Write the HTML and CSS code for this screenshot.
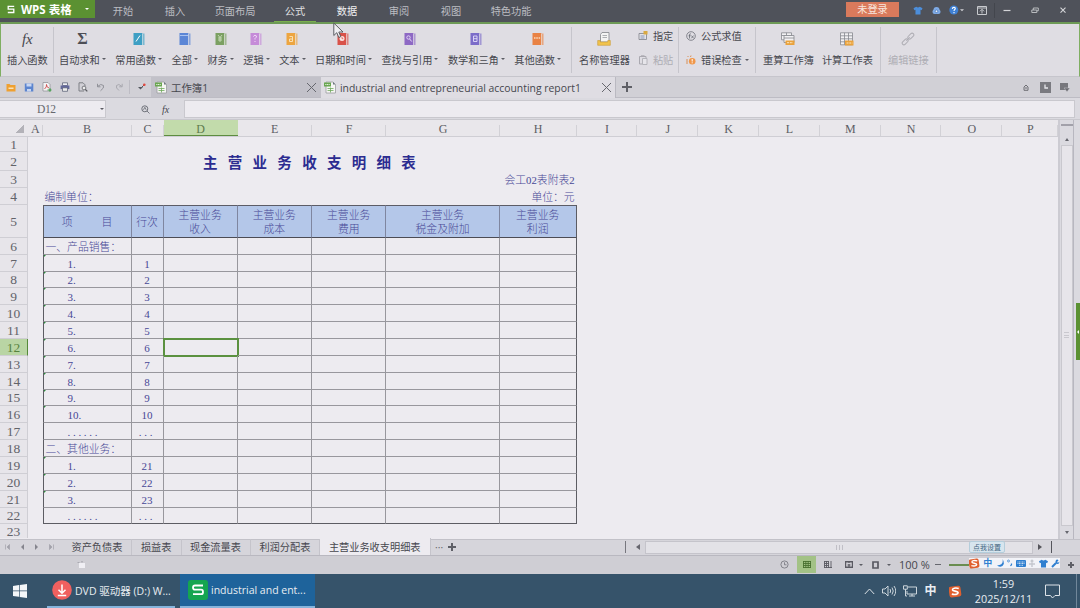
FILE: index.html
```
<!DOCTYPE html>
<html lang="zh-CN">
<head>
    <meta charset="UTF-8">
    <meta name="viewport" content="width=device-width, initial-scale=1.0">
    <title>WPS 表格</title>
    <link rel="stylesheet" href="styles.css">
</head>
<body>

<svg class="defs" width="0" height="0">
    <symbol id="book" viewBox="0 0 12 13">
        <rect x="0.5" y="0.5" width="9" height="12" fill="currentColor"/>
        <rect x="9.5" y="1" width="2" height="11.5" fill="currentColor" opacity=".65"/>
        <path d="M9.6 1v11.5" stroke="#eee" stroke-width=".6"/>
    </symbol>
    <symbol id="sheetfile" viewBox="0 0 12 13">
        <path d="M2 1h7l2.5 2.5V12H2z" fill="#f6f6f4" stroke="#9a9da0" stroke-width=".8"/>
        <path d="M9 1v2.5h2.5z" fill="#6f7680"/>
        <rect x="0" y="1.5" width="7" height="4" fill="#69a650"/>
        <path d="M1.3 3.5h4.4" stroke="#e4f2dc" stroke-width="1" stroke-dasharray="1.2 .5"/>
        <path d="M3.5 7.5h6M3.5 9.5h6M6.5 6.5v5" stroke="#6fa95a" stroke-width=".8"/>
    </symbol>
    <symbol id="sogou" viewBox="0 0 12 12">
        <rect x="0" y="1" width="11" height="10" rx="2" fill="#e0602f" transform="rotate(-8 6 6)"/>
        <path d="M9 3.200C6 2.300 3 3 3.200 4.500c.2 1.400 5.200 1 5.200 2.700 0 1.600-2.900 1.900-5.800 1.200" fill="none" stroke="#fff" stroke-width="1.500"/>
    </symbol>
    <symbol id="shirt" viewBox="0 0 10 10">
        <path d="M3 .8Q5 2.300 7 .8L10 2.500 9 4.800 7.800 4.300V9.500H2.200V4.300L1 4.800 0 2.500z" fill="currentColor"/>
    </symbol>
</svg>

<div class="titlebar">
    <div class="brand">
        <svg width="8" height="9" viewBox="0 0 8 9"><path d="M7.200 1.300H1.200V4.200H6.800V7.500H.8" fill="none" stroke="#fff" stroke-width="1.300"/></svg>
        <span>WPS 表格</span>
        <i class="arrow"></i>
    </div>
    <div class="menu">
        <a>开始</a>
        <a>插入</a>
        <a class="wide">页面布局</a>
        <a class="active">公式</a>
        <a class="hover">数据</a>
        <a>审阅</a>
        <a>视图</a>
        <a class="wide">特色功能</a>
    </div>
    <div class="login">未登录</div>
    <div class="winbtns">
        <svg class="blue" width="10" height="9"><use href="#shirt"/></svg>
        <svg class="blue" width="9" height="9" viewBox="0 0 9 9"><circle cx="4.500" cy="4" r="3" fill="#7fabe6"/><rect x=".5" y="3.500" width="8" height="4.500" rx="2" fill="#7fabe6"/><circle cx="4.500" cy="5.300" r="1.300" fill="#eef4fb" stroke="#3d6fb5" stroke-width=".7"/></svg>
        <svg class="help" width="15" height="10" viewBox="0 0 15 10"><circle cx="4.800" cy="5" r="4.500" fill="#3f80d4"/><path d="M3.300 3.900Q3.500 2.300 5 2.400 6.600 2.700 6.200 4 5 4.900 5 6M5 7v1.200" fill="none" stroke="#fff" stroke-width="1.100"/><path d="M11 4.300h4l-2 2z" fill="#d0d2d6"/></svg>
        <svg class="skin" width="10" height="9" viewBox="0 0 10 9"><path d="M.5.5h9v8h-9zM.5 2h9M5 7.500V3.500M3 5.300l2-2 2 2" fill="none" stroke="#c8cace"/></svg>
        <i class="wsep"></i>
        <svg width="8" height="8" viewBox="0 0 8 8"><path d="M.5 4.500h7" stroke="#d4d5d8" stroke-width="1.200"/></svg>
        <svg width="8" height="8" viewBox="0 0 8 8"><path d="M.8 4h5v2.500h-5zM2.300 4V2h5v2.800H6" fill="none" stroke="#c4c6ca" stroke-width=".9"/></svg>
        <svg width="8" height="8" viewBox="0 0 8 8"><path d="M1.500 1.700l5 5M6.500 1.700l-5 5" stroke="#d4d5d8" stroke-width="1.100"/></svg>
    </div>
</div>

<div class="ribbon">
    <div class="group first">
        <div class="btn"><em class="fx">fx</em><span>插入函数</span></div>
    </div>
    <div class="group funcs">
        <div class="btn"><em class="sigma">Σ</em><span>自动求和<i class="arrow"></i></span></div>
        <div class="btn"><svg class="c-teal" width="12" height="13"><use href="#book"/><path d="M3 9.500l4-6" stroke="#fff"/></svg><span>常用函数<i class="arrow"></i></span></div>
        <div class="btn"><svg class="c-blue" width="12" height="13"><use href="#book"/><path d="M1 3.500h8" stroke="#a8c2ef"/></svg><span>全部<i class="arrow"></i></span></div>
        <div class="btn"><svg class="c-green" width="12" height="13"><use href="#book"/><path d="M3 3l2 2.500L7 3M5 5.500V10M3 6h4M3 8h4" fill="none" stroke="#d6e6c8" stroke-width=".8"/></svg><span>财务<i class="arrow"></i></span></div>
        <div class="btn"><svg class="c-pink" width="12" height="13"><use href="#book"/><path d="M3.300 4.500Q5 2 6.500 4 6.500 5.500 5 6.500v1M5 9v1" fill="none" stroke="#f6e0fa" stroke-width=".9"/></svg><span>逻辑<i class="arrow"></i></span></div>
        <div class="btn"><svg class="c-amber" width="12" height="13"><use href="#book"/><path d="M3.500 4.500h3v5h-3V7h3" fill="none" stroke="#fce6be" stroke-width=".9"/></svg><span>文本<i class="arrow"></i></span></div>
        <div class="btn"><svg class="c-red" width="12" height="13"><use href="#book"/><circle cx="5" cy="6.500" r="2.500" fill="#fbe4e2"/><path d="M5 5v1.700h1.300" fill="none" stroke="#d5483f" stroke-width=".7"/></svg><span>日期和时间<i class="arrow"></i></span></div>
        <div class="btn"><svg class="c-violet" width="12" height="13"><use href="#book"/><circle cx="4.500" cy="5.500" r="1.700" fill="none" stroke="#e8dcf8" stroke-width=".9"/><path d="M5.700 7l2 2.500" stroke="#e8dcf8"/></svg><span>查找与引用<i class="arrow"></i></span></div>
        <div class="btn"><svg class="c-indigo" width="12" height="13"><use href="#book"/><path d="M3.500 4h3.500v5.500H3.500zM3.500 6.700H7" fill="none" stroke="#e2dcf8" stroke-width=".9"/></svg><span>数学和三角<i class="arrow"></i></span></div>
        <div class="btn"><svg class="c-orange" width="12" height="13"><use href="#book"/><path d="M2 6h6.500" stroke="#fbd9bd" stroke-width="1.500" stroke-dasharray="1.500 .8"/></svg><span>其他函数<i class="arrow"></i></span></div>
    </div>
    <div class="group names">
        <div class="btn"><svg width="14" height="14" viewBox="0 0 14 14"><path d="M3.500 10V2.500l1.500-2h7V10z" fill="#f4f4f4" stroke="#8c8f94" stroke-width=".9"/><path d="M5.500 3.500h4.500M5.500 5.500h4.500" stroke="#9a9da2" stroke-width=".8"/><path d="M.7 8.500v4.800h12.600V8.500h-2.500v1.500H3.200V8.500z" fill="#f1c34c" stroke="#c99b34" stroke-width=".6"/></svg><span>名称管理器</span></div>
        <div class="stack">
            <div><svg width="10" height="9" viewBox="0 0 10 9"><path d="M1 2.500h7.500v6H1z" fill="#e4e4ea" stroke="#7d8088" stroke-width=".8"/><path d="M2.500 5h4M2.500 7h4" stroke="#7081a8" stroke-width=".8"/><rect x="5.500" y="0" width="4" height="3.500" fill="#d9a942"/></svg>指定</div>
            <div class="off"><svg width="10" height="10" viewBox="0 0 10 10"><path d="M4 9H1.500V1.500H8V3M3 .8h3.500" fill="none" stroke="#aaa9b0"/><path d="M4.500 3.500H9v6H4.500z" fill="#e6e5ea" stroke="#aaa9b0" stroke-width=".8"/></svg>粘贴</div>
        </div>
    </div>
    <div class="group audit">
        <div class="stack">
            <div><svg width="10" height="10" viewBox="0 0 10 10"><circle cx="5" cy="5" r="4.300" fill="none" stroke="#6d7078" stroke-width=".8"/><path d="M4.800 2.800Q3.500 2.500 3.500 4v3.500M2.500 4.800h2.200M5.300 4.500l2.400 2.800M7.700 4.500L5.300 7.300" fill="none" stroke="#5c6068" stroke-width=".7"/></svg>公式求值</div>
            <div><svg width="10" height="10" viewBox="0 0 10 10"><path d="M1.500 1l1 1M5 .5L4.500 2M1 4v5" stroke="#d98f55" stroke-width="1"/><circle cx="6.200" cy="6.200" r="3.300" fill="#f0974a"/><path d="M6.200 4v2.500M6.200 7.300v1" stroke="#fff" stroke-width="1"/></svg>错误检查<i class="arrow"></i></div>
        </div>
    </div>
    <div class="group calc">
        <div class="btn"><svg width="14" height="14" viewBox="0 0 14 14"><path d="M.5.800h10v7H.5zM.5 3.500h10M5.500.800v7" fill="#f2f1f4" stroke="#85888e" stroke-width=".8"/><path d="M3 3.500h10v7H3zM3 6h10" fill="#f2f1f4" stroke="#85888e" stroke-width=".8"/><rect x="4.500" y="8.500" width="9" height="4.500" fill="#e9a23c"/><path d="M6 10.700h6" stroke="#fbe6bf" stroke-dasharray="2 .8"/></svg><span>重算工作簿</span></div>
        <div class="btn"><svg width="14" height="14" viewBox="0 0 14 14"><path d="M.5.800h12v12H.5zM.5 3.800h12M.5 6.800h12M.5 9.800h12M4.500.800v12M8.500.800v12" fill="#f2f1f4" stroke="#85888e" stroke-width=".8"/><rect x="5" y="8.500" width="8.500" height="5" fill="#e9a23c"/><path d="M6.500 11h6" stroke="#fbe6bf" stroke-dasharray="2 .8"/></svg><span>计算工作表</span></div>
    </div>
    <div class="group links">
        <div class="btn off"><svg width="14" height="14" viewBox="0 0 14 14"><g fill="none" stroke="#aeadb4" transform="rotate(-45 7 7)"><rect x="-.5" y="5.300" width="7" height="3.400" rx="1.700"/><rect x="7.500" y="5.300" width="7" height="3.400" rx="1.700"/><path d="M4.500 7h5"/></g></svg><span>编辑链接</span></div>
    </div>
</div>

<div class="tabbar">
    <div class="quick">
        <svg width="10" height="9" viewBox="0 0 10 9"><path d="M.5 1h3l1 1h5v6.500h-9z" fill="#efa030"/><path d="M2.500 4.500h5V6h-5z" fill="#fae2b6"/></svg>
        <svg width="10" height="9" viewBox="0 0 10 9"><path d="M.8.500h8.500v8H.800z" fill="#5c85cf"/><path d="M2.500.500h5v3h-5zM3 6h4v2.500H3z" fill="#c7d6f2"/></svg>
        <svg width="10" height="10" viewBox="0 0 10 10"><path d="M1 .5h5l2 2V9H1z" fill="#f4f2f4" stroke="#8a8c92" stroke-width=".7"/><path d="M2.500 7Q5 5 4.500 2.500 4.500 5.500 7 6" fill="none" stroke="#cc4a48" stroke-width=".9"/><path d="M5.500 8h4M8 6.300v3.400" stroke="#3d9b45" stroke-width="1.100"/></svg>
        <svg width="10" height="10" viewBox="0 0 10 10"><path d="M2.500.800h5V3.500h-5z" fill="#f0f0f4" stroke="#60647a" stroke-width=".8"/><rect x=".6" y="3.500" width="8.800" height="3.600" fill="#62679b"/><path d="M2.500 5.800h5V9.300h-5z" fill="#eee" stroke="#60647a" stroke-width=".8"/></svg>
        <svg width="10" height="10" viewBox="0 0 10 10"><path d="M6 9H1V.800h4l2 2V4" fill="none" stroke="#75777d" stroke-width=".9"/><circle cx="6" cy="6" r="1.900" fill="#eee" stroke="#6b6d73" stroke-width=".9"/><path d="M7.300 7.400l2 2" stroke="#55575c" stroke-width="1.300"/></svg>
        <svg width="10" height="9" viewBox="0 0 10 9"><path d="M1.500 3.500Q5 0 7.500 2.500 8.500 5 4.500 7.800M1.500.800v3h3" fill="none" stroke="#909198"/></svg>
        <svg width="10" height="9" viewBox="0 0 10 9"><path d="M8 3.500Q4.500 0 2.500 2.500 1.500 5 5 7.500M8.200.800v3h-3" fill="none" stroke="#a9a9b0"/></svg>
    </div>
    <div class="more"><svg width="10" height="9" viewBox="0 0 10 9"><path d="M1 4h5L3.500 6.500z" fill="#55585f"/><path d="M4 5l3-3" stroke="#55585f"/><circle cx="7.300" cy="1.700" r="1.300" fill="#e2453c"/></svg></div>
    <div class="doc"><svg width="12" height="13"><use href="#sheetfile"/></svg><span>工作簿1</span><b class="x"></b></div>
    <div class="doc current"><svg width="12" height="13"><use href="#sheetfile"/></svg><span>industrial and entrepreneurial accounting report1</span><b class="x"></b></div>
    <b class="plus"></b>
    <div class="tabicons">
        <svg width="6" height="7" viewBox="0 0 6 7"><path d="M1 3v3.300h4V3L3 1z" fill="none" stroke="#6e6e74"/><path d="M3 3v2" stroke="#6e6e74"/></svg>
        <svg width="11" height="11" viewBox="0 0 11 11"><rect width="11" height="11" fill="#7a7a80"/><path d="M5 2.500v3.500h3" fill="none" stroke="#e6e6ea" stroke-width="1.300"/></svg>
        <svg width="10" height="9" viewBox="0 0 10 9"><rect width="8" height="7" fill="#77777d"/><path d="M4 5h6l-3 3.800z" fill="#6a6a70" stroke="#d1d0d6" stroke-width=".5"/></svg>
    </div>
</div>

<div class="formulabar">
    <div class="namebox"><span>D12</span><i class="arrow"></i></div>
    <svg width="9" height="9" viewBox="0 0 9 9"><circle cx="3.800" cy="3.800" r="3" fill="none" stroke="#6d7078"/><path d="M2.500 4.800l1.300-2.500 1.300 2.500M6 6l2.500 2.500" fill="none" stroke="#6d7078" stroke-width=".9"/></svg>
    <em>fx</em>
    <div class="input"></div>
</div>

<div class="workspace">
    <div class="sheet">
        <div class="row colhead">
            <b class="corner"></b><span>A</span><span>B</span><span>C</span><span class="sel">D</span><span>E</span><span>F</span><span>G</span><span>H</span><span>I</span><span>J</span><span>K</span><span>L</span><span>M</span><span>N</span><span>O</span><span>P</span>
        </div>
        <div class="row r1"><b>1</b></div>
        <div class="row r2"><b>2</b><h1>主营业务收支明细表</h1></div>
        <div class="row r3"><b>3</b><p class="right">会工02表附表2</p></div>
        <div class="row r3"><b>4</b><p class="left">编制单位：</p><p class="right">单位：元</p></div>
        <div class="row head"><b>5</b><i></i><span class="item"><u>项</u><u>目</u></span><span>行次</span><span>主营业务<br>收入</span><span>主营业务<br>成本</span><span>主营业务<br>费用</span><span>主营业务<br>税金及附加</span><span>主营业务<br>利润</span></div>
        <div class="row data"><b>6</b><i></i><span class="section">一、产品销售：</span><span></span><span></span><span></span><span></span><span></span><span></span></div>
        <div class="row data"><b>7</b><i></i><span class="mark">1.</span><span>1</span><span></span><span></span><span></span><span></span><span></span></div>
        <div class="row data"><b>8</b><i></i><span class="mark">2.</span><span>2</span><span></span><span></span><span></span><span></span><span></span></div>
        <div class="row data"><b>9</b><i></i><span class="mark">3.</span><span>3</span><span></span><span></span><span></span><span></span><span></span></div>
        <div class="row data"><b>10</b><i></i><span class="mark">4.</span><span>4</span><span></span><span></span><span></span><span></span><span></span></div>
        <div class="row data"><b>11</b><i></i><span class="mark">5.</span><span>5</span><span></span><span></span><span></span><span></span><span></span></div>
        <div class="row data"><b class="sel">12</b><i></i><span class="mark">6.</span><span>6</span><span class="cursor-cell"></span><span></span><span></span><span></span><span></span></div>
        <div class="row data"><b>13</b><i></i><span class="mark">7.</span><span>7</span><span></span><span></span><span></span><span></span><span></span></div>
        <div class="row data"><b>14</b><i></i><span class="mark">8.</span><span>8</span><span></span><span></span><span></span><span></span><span></span></div>
        <div class="row data"><b>15</b><i></i><span class="mark">9.</span><span>9</span><span></span><span></span><span></span><span></span><span></span></div>
        <div class="row data"><b>16</b><i></i><span class="mark">10.</span><span>10</span><span></span><span></span><span></span><span></span><span></span></div>
        <div class="row data"><b>17</b><i></i><span class="dots">......</span><span class="dots">...</span><span></span><span></span><span></span><span></span><span></span></div>
        <div class="row data"><b>18</b><i></i><span class="section">二、其他业务：</span><span></span><span></span><span></span><span></span><span></span><span></span></div>
        <div class="row data"><b>19</b><i></i><span class="mark">1.</span><span>21</span><span></span><span></span><span></span><span></span><span></span></div>
        <div class="row data"><b>20</b><i></i><span class="mark">2.</span><span>22</span><span></span><span></span><span></span><span></span><span></span></div>
        <div class="row data"><b>21</b><i></i><span class="mark">3.</span><span>23</span><span></span><span></span><span></span><span></span><span></span></div>
        <div class="row data last"><b>22</b><i></i><span class="dots">......</span><span class="dots">...</span><span></span><span></span><span></span><span></span><span></span></div>
        <div class="row r23"><b>23</b></div>
    </div>
    <div class="vscroll">
        <div class="split"></div>
        <i class="up"></i>
        <div class="thumb"><i></i></div>
        <i class="down"></i>
    </div>
    <div class="edge"></div>
</div>

<div class="sheettabs">
    <div class="nav">
        <svg width="5" height="6" viewBox="0 0 5 6"><path d="M.5.500v5M4.500.500L2 3l2.500 2.500z" fill="#a2a2aa" stroke="#a2a2aa" stroke-width=".7"/></svg>
        <svg width="5" height="6" viewBox="0 0 5 6"><path d="M4 0L1 3l3 3z" fill="#85858e"/></svg>
        <svg width="5" height="6" viewBox="0 0 5 6"><path d="M1 0l3 3-3 3z" fill="#85858e"/></svg>
        <svg width="5" height="6" viewBox="0 0 5 6"><path d="M4.500.500v5M.5.500L3 3 .5 5.500z" fill="#a2a2aa" stroke="#a2a2aa" stroke-width=".7"/></svg>
    </div>
    <span>资产负债表</span><span>损益表</span><span>现金流量表</span><span>利润分配表</span><span class="current">主营业务收支明细表</span>
    <em>···</em>
    <b class="plus"></b>
    <div class="hscroll">
        <svg width="4" height="6" viewBox="0 0 4 6"><path d="M4 0L0 3l4 3z" fill="#66666e"/></svg>
        <div class="track"><i></i></div>
        <svg width="4" height="6" viewBox="0 0 4 6"><path d="M0 0l4 3-4 3z" fill="#55555c"/></svg>
    </div>
</div>

<div class="status">
    <svg class="rec" width="9" height="8" viewBox="0 0 9 8"><path d="M2 2h6v5H2z" fill="#f0eff4"/><path d="M.5 1.500h2M4 .8h2" stroke="#a8a8b0"/></svg>
    <div class="views">
        <svg class="hist" width="9" height="9" viewBox="0 0 9 9"><circle cx="4.500" cy="4.500" r="3.600" fill="none" stroke="#7a7a82" stroke-width=".9"/><path d="M4.500 2.300v2.500h2" fill="none" stroke="#7a7a82" stroke-width=".9"/></svg>
        <div class="on"><svg width="8" height="7" viewBox="0 0 8 7"><path d="M0 .5h8M0 2.500h8M0 4.500h8M0 6.500h8M.5 0v7M2.800 0v7M5.200 0v7M7.500 0v7" stroke="#4a7030" stroke-width=".9"/></svg></div>
        <svg class="pg" width="8" height="7" viewBox="0 0 8 7"><path d="M0 .5h5M0 2.500h5M0 4.500h5M0 6.500h8M.5 0v7M2.500 0v7M4.500 0v7M7 0v7" stroke="#5a5a62" stroke-width=".9"/></svg>
        <svg class="br" width="8" height="7" viewBox="0 0 8 7"><path d="M.5.700h7v5.600h-7z" fill="none" stroke="#5a5a62" stroke-width="1.400"/><path d="M4 0v2M2.500 4h3M4 3v3" stroke="#5a5a62" stroke-width="1.200"/></svg>
        <i class="arrow"></i>
        <svg class="bx" width="7" height="8" viewBox="0 0 7 8"><path d="M1 1h5v6H1z" fill="none" stroke="#5a5a62" stroke-width="1.700"/></svg>
        <i class="arrow"></i>
        <span>100 %</span>
        <b class="minus"></b>
        <i class="slider"></i>
        <b class="plus"></b>
    </div>
</div>

<div class="taskbar">
    <svg class="win" width="14" height="14" viewBox="0 0 14 14"><path d="M0 2l6-.9V6.600H0zM6.700 1L14 0v6.600H6.700zM0 7.300h6v5.500L0 12zM6.700 7.300H14V14l-7.300-1z" fill="#f4f6f8"/></svg>
    <div class="task">
        <svg width="20" height="20" viewBox="0 0 20 20"><circle cx="10" cy="10" r="9.800" fill="#f0605f"/><path d="M10 4.500v8.500M6.500 9.800L10 13.200l3.500-3.400M5.800 15.500h8.400" fill="none" stroke="#fff" stroke-width="1.500"/></svg>
        <span>DVD 驱动器 (D:) W...</span>
    </div>
    <div class="task front">
        <svg width="20" height="20" viewBox="0 0 20 20"><rect width="20" height="20" rx="3" fill="#15a550"/><path d="M15 5.500H7Q5 5.500 5 7.500 5 9.700 7 9.700h6q2 0 2 2.200 0 2.300-2 2.300H5" fill="none" stroke="#fff" stroke-width="1.800"/></svg>
        <span>industrial and ent...</span>
    </div>
    <div class="tray">
        <svg width="11" height="7" viewBox="0 0 11 7"><path d="M.8 6l4.700-5 4.700 5" fill="none" stroke="#dde3e8"/></svg>
        <svg width="14" height="12" viewBox="0 0 14 12"><path d="M.5 4h2.500l3-3v10l-3-3H.5zM8 4q1.300 2 0 4M10 2.500q2.500 3.500 0 7M12 1q3.500 5 0 10" fill="none" stroke="#dde3e8" stroke-width=".9"/></svg>
        <svg width="14" height="12" viewBox="0 0 14 12"><path d="M5 2h8.500v7H4V6M6 11h6M9 9v2M.5.800h3.800v3.400H.5zM2.500 4.200V11H4" fill="none" stroke="#dde3e8" stroke-width=".9"/></svg>
        <b>中</b>
        <svg class="sg" width="13" height="13"><use href="#sogou"/></svg>
        <div class="clock">1:59<br>2025/12/11</div>
        <svg width="15" height="15" viewBox="0 0 15 15"><path d="M.5 1h14v10.500H10L7.500 14 5.500 11.500H.5z" fill="none" stroke="#dde3e8"/></svg>
        <i class="desk"></i>
    </div>
</div>

<!-- floating things -->
<div class="sidetab"></div>
<div class="imetip">点我设置</div>
<div class="ime">
    <svg width="11" height="11"><use href="#sogou"/></svg>
    <b>中</b>
    <svg width="8" height="8" viewBox="0 0 8 8"><path d="M6.500 0Q8 6 1 6.500 6 9.500 7.800 5 8 2 6.500 0z" fill="#2f7fd0"/></svg>
    <svg width="6" height="8" viewBox="0 0 6 8"><circle cx="1.500" cy="2" r="1" fill="none" stroke="#2f7fd0" stroke-width=".7"/><path d="M4.500 4.500v1.200L3.500 7" fill="none" stroke="#2f7fd0" stroke-width="1.200"/></svg>
    <svg width="10" height="7" viewBox="0 0 10 7"><rect width="10" height="7" rx="1" fill="#2f7fd0"/><path d="M1.500 2h7M1.500 3.500h7M3 5.300h4" stroke="#fff" stroke-width=".7" stroke-dasharray="1 .5"/></svg>
    <svg width="6" height="8" viewBox="0 0 6 8"><circle cx="3" cy="2" r="1.500" fill="#c5c8cf"/><path d="M0 5h6M3 3.500V8" stroke="#c5c8cf" stroke-width="1.500"/></svg>
    <svg width="9" height="9"><use href="#shirt"/></svg>
    <svg width="9" height="9" viewBox="0 0 9 9"><path d="M1 8l4-4" stroke="#2f7fd0" stroke-width="2"/><path d="M7.500 1.500L6 3l1 .8L8.500 2.500Q8.500 5.500 5.500 5 3.500 3 5 1 6.500 0 7.500 1.500z" fill="#2f7fd0"/></svg>
</div>
<svg class="pointer" width="12" height="17" viewBox="0 0 12 17"><path d="M.8 1v12.500l3-2.800 2 4.800 2-.9-2-4.600h4.200z" fill="#f0eff3" stroke="#4e5056" stroke-width=".9"/></svg>

</body>
</html>
```
FILE: styles.css
```
* {
    box-sizing: border-box;
}
body {
    margin: 0;
    width: 1080px;
    height: 608px;
    overflow: hidden;
    position: relative;
    display: flex;
    flex-direction: column;
    font-family: "Open Sans", "Noto Sans CJK SC", sans-serif;
    font-size: 10.2px;
    color: #46474e;
    background: #d1d0d6;
    white-space: nowrap;
}
svg {
    display: block;
    flex: none;
}
.defs {
    position: absolute;
}
i, em {
    font-style: normal;
}
.arrow {
    display: inline-block;
    border: 2px solid transparent;
    border-top-color: #5c5d64;
    border-bottom: 0;
}

/* title bar */
.titlebar {
    height: 24px;
    flex: none;
    display: flex;
    background: #4f525a;
    border-bottom: 2px solid #6d9a56;
}
.titlebar > div {
    flex: none;
}
.brand {
    width: 95px;
    height: 18px;
    padding-left: 7px;
    display: flex;
    align-items: center;
    background: #5b9132;
    color: #fff;
    font-size: 11.5px;
    font-weight: bold;
}
.brand span {
    width: 64px;
    margin-left: 6px;
}
.brand .arrow {
    border-top-color: #fff;
}
.menu {
    display: flex;
    margin-left: 2px;
    color: #bcbdc2;
}
.menu a {
    width: 52px;
    height: 22px;
    line-height: 23px;
    text-align: center;
}
.menu a.wide {
    width: 68px;
}
.menu .active {
    color: #e0e0e3;
    width: 42px;
    margin: 0 5px;
    border-bottom: 1px solid #7bb04e;
}
.menu .hover {
    color: #f0f0f2;
}
.login {
    width: 53px;
    height: 15px;
    margin: 2px 0 0 301px;
    line-height: 15px;
    text-align: center;
    background: #d97a5c;
    color: #f8e6de;
}
.winbtns {
    display: flex;
    align-items: center;
    height: 20px;
    margin-left: 14px;
}
.winbtns svg {
    margin-right: 20px;
}
.winbtns .blue {
    color: #4c8edb;
    margin-right: 9px;
}
.winbtns .help {
    margin: 0 13px 0 -1px;
}
.winbtns .skin {
    margin-right: 7px;
}
.wsep {
    width: 1px;
    height: 15px;
    margin-right: 8px;
    background: #43464d;
}

/* ribbon */
.ribbon {
    height: 53px;
    flex: none;
    display: flex;
    background: #dfdde3;
    border-left: 1px solid #7fae62;
    border-right: 1px solid #7fae62;
    border-bottom: 1px solid #c6c5cc;
}
.group {
    display: flex;
    flex: none;
    gap: 9px;
    height: 46px;
    margin-top: 3px;
    padding: 0 7px;
    border-right: 1px solid #c6c5cc;
}
.group.first {
    width: 53px;
    padding: 0 0 0 6px;
}
.group.funcs {
    width: 518px;
    padding-left: 5px;
    gap: 9.500px;
}
.group.names {
    width: 107px;
    gap: 8px;
}
.group.audit {
    width: 77px;
}
.group.calc {
    width: 125px;
    gap: 8px;
}
.btn {
    display: flex;
    flex-direction: column;
    align-items: center;
}
.btn svg, .btn em {
    height: 14px;
    margin-top: 5px;
}
.btn span {
    margin-top: 7px;
    line-height: 15px;
}
.btn .arrow, .stack .arrow {
    margin-left: 2px;
    vertical-align: 4px;
}
.fx {
    font: italic 15px/14px "Liberation Serif", serif;
}
.sigma {
    font: bold 16px/14px "Liberation Serif", serif;
    color: #4d4e55;
}
.off {
    color: #aeadb4;
}
.stack {
    display: flex;
    flex-direction: column;
    gap: 9px;
    padding-top: 1px;
}
.stack div {
    display: flex;
    align-items: center;
    gap: 5px;
    height: 15px;
}
.stack .arrow {
    margin-left: -2px;
}
.c-teal { color: #3e9fc4; }
.c-blue { color: #5b86d6; }
.c-green { color: #7ba062; }
.c-pink { color: #c58bd8; }
.c-amber { color: #eda540; }
.c-red { color: #d9524a; }
.c-violet { color: #8d68c4; }
.c-indigo { color: #7c6dc9; }
.c-orange { color: #e98244; }

/* document tabs */
.tabbar {
    height: 21px;
    flex: none;
    display: flex;
    align-items: center;
    border-bottom: 1px solid #bdbcc4;
    background: #d1d0d6;
}
.quick {
    width: 130px;
    height: 14px;
    display: flex;
    align-items: center;
    gap: 8px;
    padding-left: 6px;
    border-right: 1px solid #bdbcc4;
}
.more {
    width: 21px;
    padding-left: 7px;
}
.doc {
    width: 170px;
    height: 20px;
    display: flex;
    align-items: center;
    padding: 0 5px 0 4px;
    background: #c2c1c9;
    font-size: 10.400px;
}
.doc span {
    flex: 1;
    margin-left: 4px;
    line-height: 20px;
    padding-top: 2px;
}
.doc.current {
    width: 295px;
    height: 21px;
    padding: 0 4px 0 3px;
    background: #dfdde3;
    border-right: 1px solid #bab9c1;
}
.x {
    width: 9px;
    height: 9px;
    background: linear-gradient(45deg, transparent 46%, #66676e 46%, #66676e 54%, transparent 54%),
        linear-gradient(-45deg, transparent 46%, #66676e 46%, #66676e 54%, transparent 54%);
}
.plus {
    width: 10px;
    height: 10px;
    background: linear-gradient(#5f6067, #5f6067) center / 100% 2px no-repeat,
        linear-gradient(#5f6067, #5f6067) center / 2px 100% no-repeat;
}
.tabbar .plus {
    margin-left: 6px;
}
.tabicons {
    margin-left: auto;
    padding-right: 10px;
    display: flex;
    align-items: center;
    gap: 9px;
}
.tabicons svg:first-child {
    margin-right: 2px;
}

/* formula bar */
.formulabar {
    height: 22px;
    flex: none;
    display: flex;
    align-items: center;
    padding-top: 1px;
    border-bottom: 1px solid #c9c8ce;
    background: #dbdae0;
}
.namebox {
    width: 106px;
    height: 18px;
    display: flex;
    align-items: center;
    margin-right: 35px;
    background: #edebf0;
    border: 1px solid #c9c8ce;
    border-left: 0;
    font: 11.5px "Liberation Serif", serif;
    color: #66676e;
}
.namebox span {
    width: 100px;
    padding-left: 37px;
    flex: none;
    letter-spacing: -0.4px;
}
.formulabar em {
    margin-left: 12px;
    width: 22px;
    font: italic 10px "Liberation Serif", serif;
}
.input {
    width: 891px;
    height: 18px;
    background: #edebf0;
    border: 1px solid #c9c8ce;
}

/* sheet */
.workspace {
    height: 418.500px;
    flex: none;
    display: flex;
}
.sheet {
    width: 1058px;
    overflow: hidden;
    background: #edebf0;
    font-family: "Liberation Serif", "Noto Sans CJK SC", serif;
    font-size: 10.800px;
    font-weight: 300;
    line-height: 12px;
    color: #484896;
}
.row {
    display: grid;
    grid-template-columns: 28px 14.500px 89px 32px 74.200px 74.200px 74.600px 113.200px 77px repeat(7, 60.800px) 56px;
    grid-template-rows: 100%;
    height: 16.870px;
}
.row > b {
    display: flex;
    align-items: center;
    justify-content: center;
    padding-top: 2px;
    background: #e7e5ea;
    border-right: 1px solid #cfced4;
    border-bottom: 1px solid #cfced4;
    font-weight: normal;
    font-size: 13.500px;
    color: #626369;
}
.row > b.sel {
    background: #b9d5a4;
    border-right: 1.500px solid #55893a;
    color: #58833f;
}
.colhead {
    height: 17px;
    background: #e9e7eb;
    border-bottom: 1px solid #cfced4;
    font-size: 12px;
    color: #5d5e65;
}
.colhead span {
    display: flex;
    align-items: center;
    justify-content: center;
    padding-top: 2px;
    background: linear-gradient(#d2d1d6, #d2d1d6) right 5px / 1px 12px no-repeat;
}
.colhead .sel {
    background: #c2dbab;
    border-bottom: 1px solid #5d8c40;
    padding-top: 3px;
    color: #5e7a4c;
}
.row > .corner {
    border: 0;
    background: linear-gradient(135deg, transparent 50%, #b3b2b8 50%) 16px 5px / 8px 8px no-repeat;
}
.r1 { height: 14.600px; }
.r2 { height: 19.300px; }
.r3 { height: 17px; }
.r23 { height: 14px; }
.r23 b { border-bottom: 0; }
.head { height: 32.900px; }
.row h1 {
    grid-column: 3 / 10;
    margin: 0;
    padding-top: 3px;
    text-align: center;
    font-size: 14.500px;
    line-height: 14px;
    font-weight: bold;
    letter-spacing: 10.300px;
    color: #2c2c90;
    font-family: "Noto Sans CJK SC", sans-serif;
    text-indent: 10px;
}
.row p {
    margin: 0;
    line-height: 19px;
}
.row .left {
    grid-column: 3 / 6;
    padding-left: 2px;
    grid-row: 1;
}
.row .right {
    grid-column: 7 / 10;
    grid-row: 1;
    text-align: right;
    padding-right: 2px;
}
.head span {
    display: flex;
    align-items: center;
    justify-content: center;
    text-align: center;
    line-height: 14px;
    padding-top: 2px;
    background: #b4c7e9;
    border-right: 1px solid #7f86a0;
    border-top: 1px solid #5c5c66;
    border-bottom: 1px solid #4c4c55;
}
.head .item {
    gap: 29px;
}
.item u {
    text-decoration: none;
}
.data span {
    position: relative;
    display: flex;
    align-items: center;
    justify-content: center;
    padding-top: 2px;
    font-size: 11px;
    border-right: 1px solid #98979d;
    border-bottom: 1px solid #98979d;
}
.head span:nth-child(3), .data span:nth-child(3) {
    border-left: 1px solid #5c5c63;
}
.head span:last-child, .data span:last-child {
    border-right-color: #5c5c63;
}
.last span {
    border-bottom-color: #5c5c63;
}
.data span:nth-child(3) {
    justify-content: flex-start;
    padding-left: 24px;
}
.data .section:nth-child(3) {
    padding-left: 2px;
    font-size: 10.800px;
}
.data .dots {
    letter-spacing: 2.700px;
}
.mark::before {
    content: "";
    position: absolute;
    left: 0;
    top: 0;
    border: 1.500px solid #2c8a3c;
    border-right-color: transparent;
    border-bottom-color: transparent;
}
.cursor-cell::after {
    content: "";
    position: absolute;
    left: -1px;
    top: -1px;
    right: -2px;
    bottom: -2px;
    border: 2px solid #5b9140;
}
.vscroll {
    width: 16px;
    display: flex;
    flex-direction: column;
    align-items: center;
    background: #dbdae0;
    border-left: 2px solid #cccbd2;
    border-right: 1px solid #b8b7c0;
}
.split {
    width: 12px;
    height: 2px;
    margin-top: 4px;
    background: #a2a1aa;
}
.up, .down {
    margin: 12px 0 4px;
    border: 2.500px solid transparent;
    border-top: 0;
    border-bottom: 3px solid #66676e;
}
.down {
    margin: 5px 0;
    border-top: 3px solid #66676e;
    border-bottom: 0;
}
.thumb {
    width: 12px;
    flex: 1;
    display: flex;
    align-items: center;
    justify-content: center;
    background: #e7e5ea;
    border: 1px solid #c9c8ce;
}
.thumb i {
    width: 5px;
    height: 6px;
    background: repeating-linear-gradient(#c9c8ce 0 1px, transparent 1px 2.500px);
}
.edge {
    flex: 1;
    background: #dbdae0;
}

/* sheet tabs */
.sheettabs {
    height: 17px;
    flex: none;
    display: flex;
    align-items: center;
    background: #d6d5db;
    border-top: 1px solid #c2c1c8;
    border-bottom: 1px solid #b9b8c0;
}
.nav {
    width: 62.500px;
    display: flex;
    gap: 9.500px;
    padding-left: 5px;
}
.sheettabs span {
    padding: 0 9px;
    height: 16px;
    line-height: 17px;
    border-right: 1px solid #c5c4cb;
    margin-right: -0.500px;
}
.sheettabs .current {
    margin-top: -2px;
    height: 17px;
    line-height: 19px;
    background: #edebf0;
}
.sheettabs em {
    margin: 0 5px 0 5px;
    color: #66676e;
}
.sheettabs .plus {
    width: 8px;
    height: 8px;
}
.hscroll {
    width: 427px;
    height: 12px;
    margin-left: auto;
    margin-right: 28px;
    display: flex;
    align-items: center;
    gap: 5px;
    padding: 0 9px 0 10px;
    border-left: 1px solid #77777e;
    border-right: 1px solid #55555c;
}
.track {
    flex: 1;
    height: 13px;
    display: flex;
    align-items: center;
    justify-content: center;
    background: #e3e2e7;
    border: 1px solid #c5c4cb;
}
.track i {
    width: 7px;
    height: 5px;
    background: repeating-linear-gradient(90deg, #c0bfc6 0 1px, transparent 1px 3px);
}

/* status bar */
.status {
    height: 18.500px;
    flex: none;
    display: flex;
    align-items: center;
    background: #cfced4;
}
.rec {
    margin-left: 77px;
}
.views {
    margin-left: 694px;
    display: flex;
    align-items: center;
    flex: 1;
    height: 100%;
}
.on {
    width: 19px;
    height: 17px;
    margin: 0 8px;
    display: flex;
    align-items: center;
    justify-content: center;
    background: #a3c286;
}
.br {
    margin: 0 6px 0 13px;
}
.bx {
    margin: 0 8px 0 9px;
}
.views span {
    margin: 0 6px 0 8px;
    font-size: 11px;
    width: 30px;
}
.minus {
    width: 6px;
    height: 1px;
    background: #66676e;
}
.slider {
    width: 28px;
    height: 2px;
    margin-left: 8px;
    background: #6a8d50;
}
.views .plus {
    width: 6px;
    height: 6px;
    margin-left: auto;
    margin-right: 6px;
}

/* taskbar */
.taskbar {
    flex: 1;
    display: flex;
    background: #36536a;
    color: #e8edf1;
    font-size: 11px;
}
.win {
    margin: 10px 19px 0 13px;
}
.task {
    width: 130px;
    height: 34px;
    padding: 0 0 2px 6px;
    display: flex;
    align-items: center;
    gap: 3px;
    background: linear-gradient(#85b4dc, #85b4dc) 1px 100% / 128px 2px no-repeat;
}
.task.front {
    width: 135px;
    margin-left: 4px;
    padding-left: 8px;
    background: linear-gradient(#85b4dc, #85b4dc) 0 100% / 135px 2px no-repeat #1e639b;
}
.task span {
    font-size: 10.500px;
}
.tray {
    margin-left: auto;
    display: flex;
    align-items: center;
    height: 34px;
    gap: 7px;
}
.tray b {
    font-size: 12px;
    line-height: 16px;
}
.sg {
    margin: 0 4px 0 5px;
}
.clock {
    width: 62px;
    text-align: center;
    font-size: 10.800px;
    line-height: 15.500px;
}
.tray > svg:nth-last-child(2) {
    margin: 0 9.500px 0 3px;
}
.desk {
    width: 4px;
    height: 34px;
    border-left: 1px solid #71879a;
}

/* overlays */
.sidetab {
    position: absolute;
    right: 0;
    top: 303px;
    width: 4px;
    height: 57px;
    background: #5b9132;
}
.sidetab::after {
    content: "";
    position: absolute;
    left: 1px;
    top: 27px;
    border: 2px solid transparent;
    border-left: 0;
    border-right-color: #fff;
}
.imetip {
    position: absolute;
    left: 969px;
    top: 541px;
    width: 36px;
    height: 12px;
    line-height: 12px;
    text-align: center;
    font-size: 7px;
    color: #43667f;
    background: #d7e5ee;
    border: 1px solid #b4cddb;
    border-radius: 2px;
}
.ime {
    position: absolute;
    left: 969px;
    top: 558px;
    width: 91px;
    height: 10px;
    display: flex;
    align-items: center;
    justify-content: space-between;
    background: #f2f3f8;
    color: #2f7fd0;
}
.ime b {
    font-size: 9px;
    line-height: 10px;
}
.pointer {
    position: absolute;
    left: 333px;
    top: 22px;
}
```
